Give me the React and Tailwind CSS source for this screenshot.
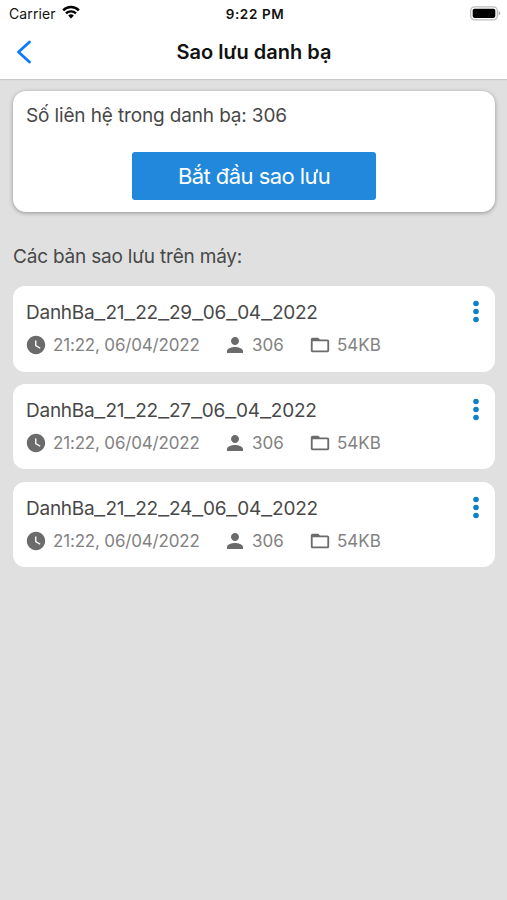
import { MdFolderOpen, MdPerson, MdWatchLater } from "react-icons/md";

const backups = [
	{
		name: "DanhBa_21_22_29_06_04_2022",
		time: "21:22, 06/04/2022",
		contacts: 306,
		size: "54KB",
	},
	{
		name: "DanhBa_21_22_27_06_04_2022",
		time: "21:22, 06/04/2022",
		contacts: 306,
		size: "54KB",
	},
	{
		name: "DanhBa_21_22_24_06_04_2022",
		time: "21:22, 06/04/2022",
		contacts: 306,
		size: "54KB",
	},
];

function StatusBar() {
	return (
		<div className="h-[27px] flex items-center justify-between pl-[9px] pr-[6px]">
			<div className="w-[150px] flex items-center gap-[6px]">
				<span className="text-[14px] leading-[18px] tracking-[0.1px]">Carrier</span>
				<svg className="-mt-[3px]" width="18" height="14" viewBox="0 0 19 14" fill="none" stroke="#000">
					<path d="M1.2 5.2a11.8 11.8 0 0 1 16.6 0" strokeWidth="2.7" />
					<path d="M4.2 8.5a7.5 7.5 0 0 1 10.6 0" strokeWidth="2.5" />
					<path d="M9.5 13.8 6.5 10.8a4.3 4.3 0 0 1 6 0z" fill="#000" stroke="none" />
				</svg>
			</div>
			<span className="text-[13.5px] leading-[18px] font-semibold tracking-[0.6px]">
				9:22 PM
			</span>
			<div className="w-[150px] flex justify-end">
				<svg width="31" height="15" viewBox="0 0 31 15">
					<rect x="0.7" y="0.8" width="26.6" height="13" rx="3.8" fill="#fff" stroke="#bdbdbd" strokeWidth="1.3" />
					<rect x="2.7" y="2.7" width="22.6" height="9.2" rx="1.8" fill="#000" />
					<path d="M28.6 5.2c2.2.6 2.2 3.6 0 4.2z" fill="#aaa" />
				</svg>
			</div>
		</div>
	);
}

function Header() {
	return (
		<div className="h-[52px] flex items-center justify-between pl-[16px] pr-[15px]">
			<svg className="-mt-[2px]" width="17" height="24" viewBox="0 0 17 24" fill="none">
				<path d="M13.5 2 2.5 12l11 10" stroke="#0a7aff" strokeWidth="2.8" strokeLinecap="round" strokeLinejoin="round" />
			</svg>
			<h1 className="-mt-[2px] text-[20px] leading-[26px] font-semibold">
				Sao lưu danh bạ
			</h1>
			<div className="w-[17px]" />
		</div>
	);
}

function BackupName({ name }) {
	// the underscores are drawn wider than the font has them
	return (
		<p className="text-[19px] leading-[26px] tracking-[-0.25px] text-[#484848]">
			{name.split("_").map((part, i) => (
				<span key={i}>
					{i > 0 && (
						<span className="inline-block w-[11px] origin-left scale-x-[1.3]">_</span>
					)}
					{part}
				</span>
			))}
		</p>
	);
}

function BackupItem({ item }) {
	return (
		<div className="h-[85.6px] bg-white rounded-[12px] flex justify-between pl-[13px] pr-[15px]">
			<div className="pt-[14.3px]">
				<BackupName name={item.name} />
				<div className="-ml-[1px] mt-[8px] h-[22px] flex items-center text-[17px] leading-[22px] text-[#828282]">
					<div className="w-[198px] flex items-center gap-[6px]">
						<MdWatchLater size={22} color="#6b6b6b" />
						<span className="tracking-[-0.18px]">{item.time}</span>
					</div>
					<div className="w-[86px] flex items-center gap-[5px]">
						<MdPerson size={24} color="#6b6b6b" />
						<span>{item.contacts}</span>
					</div>
					<div className="flex items-center gap-[6px]">
						<MdFolderOpen size={22} color="#6b6b6b" />
						<span>{item.size}</span>
					</div>
				</div>
			</div>
			<svg className="mt-[14px]" width="8" height="24" viewBox="0 0 8 24" fill="#0c80c8">
				<circle cx="4" cy="3.5" r="2.8" />
				<circle cx="4" cy="11.5" r="2.8" />
				<circle cx="4" cy="19.5" r="2.8" />
			</svg>
		</div>
	);
}

export default function App() {
	return (
		<div className="w-full h-[900px] overflow-hidden bg-[#e0e0e0] text-[#111] font-['Inter','Liberation_Sans',sans-serif]">
			<div className="h-[79px] bg-white shadow-[0_1px_1px_rgba(0,0,0,0.1)]">
				<StatusBar />
				<Header />
			</div>
			<div className="pl-[13px] pr-[12px] pt-[12px]">
				<div className="h-[121px] bg-white rounded-[13px] px-[13px] pt-[12px] shadow-[0_1px_4px_rgba(0,0,0,0.35)]">
					<p className="text-[19px] leading-[26px] tracking-[-0.14px] text-[#484848]">
						Số liên hệ trong danh bạ: 306
					</p>
					<button className="mt-[23px] mx-auto w-[244px] h-[48px] flex items-center justify-center rounded-[3px] bg-[#2188dc] text-white text-[22px] tracking-[-0.55px]">
						Bắt đầu sao lưu
					</button>
				</div>
				<p className="mt-[32px] text-[19px] leading-[26px] tracking-[-0.2px] text-[#484848]">
					Các bản sao lưu trên máy:
				</p>
				<div className="mt-[16.2px] flex flex-col gap-[12.1px]">
					{backups.map((item) => (
						<BackupItem key={item.name} item={item} />
					))}
				</div>
			</div>
		</div>
	);
}
